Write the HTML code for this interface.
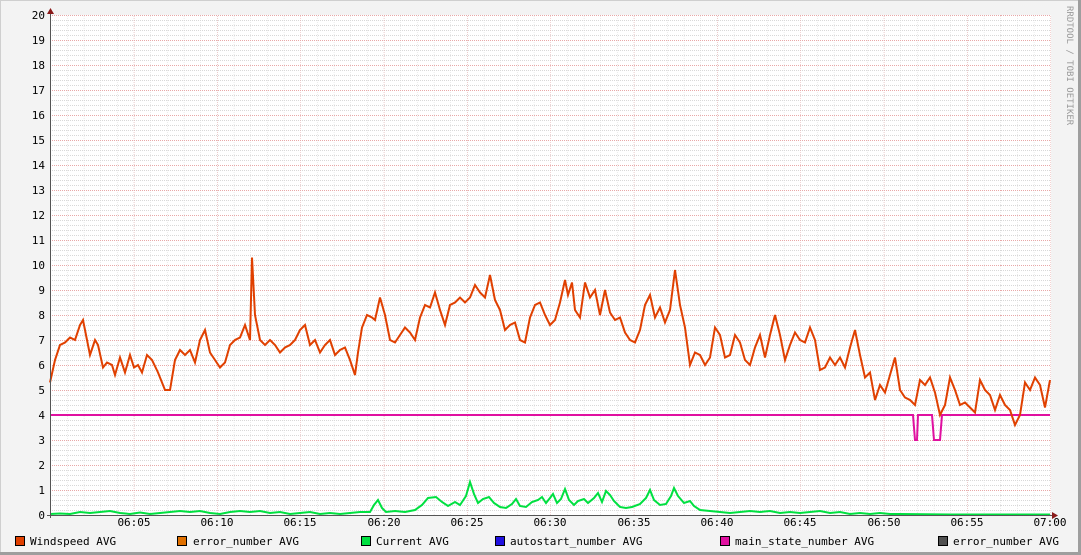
<!DOCTYPE html>
<html><head><meta charset="utf-8"><style>
html,body{margin:0;padding:0;background:#f3f3f3}
svg{display:block}
text{font-family:"DejaVu Sans Mono","Liberation Mono",monospace;font-size:11px;fill:#000}
</style></head><body>
<svg width="1081" height="555" xmlns="http://www.w3.org/2000/svg">
<rect x="0" y="0" width="1081" height="555" fill="#f3f3f3"/>
<line x1="0.5" y1="0" x2="0.5" y2="555" stroke="#cfcfcf"/>
<line x1="0" y1="0.5" x2="1081" y2="0.5" stroke="#cfcfcf"/>
<line x1="1079.5" y1="0" x2="1079.5" y2="555" stroke="#9e9e9e" stroke-width="3"/>
<line x1="0" y1="553.5" x2="1081" y2="553.5" stroke="#9e9e9e" stroke-width="3"/>
<rect x="50" y="15" width="1001" height="500" fill="#fff"/>
<defs>
<pattern id="mh" x="0" y="15" width="1001" height="5" patternUnits="userSpaceOnUse"><line x1="0" y1="0.5" x2="1001" y2="0.5" stroke="#d8d8d8" stroke-dasharray="1,1"/></pattern>
<pattern id="mv" x="50.5" y="0" width="16.667" height="500" patternUnits="userSpaceOnUse"><line x1="0" y1="0" x2="0" y2="500" stroke="#d8d8d8" stroke-dasharray="1,1"/></pattern>
<pattern id="Mh" x="0" y="15" width="1001" height="25" patternUnits="userSpaceOnUse"><line x1="0" y1="0.5" x2="1001" y2="0.5" stroke="#e8a8a8" stroke-dasharray="1,1"/></pattern>
<pattern id="Mv" x="50.5" y="0" width="83.333" height="500" patternUnits="userSpaceOnUse"><line x1="0" y1="0" x2="0" y2="500" stroke="#e8a8a8" stroke-dasharray="1,1"/></pattern>
</defs>
<rect x="50" y="15" width="1001" height="500" fill="url(#mh)"/>
<rect x="50" y="15" width="1001" height="500" fill="url(#mv)"/>
<rect x="50" y="15" width="1001" height="500" fill="url(#Mh)"/>
<rect x="50" y="15" width="1001" height="500" fill="url(#Mv)"/>
<g text-anchor="end">
<text x="45" y="19">20</text><text x="45" y="44">19</text><text x="45" y="69">18</text><text x="45" y="94">17</text><text x="45" y="119">16</text><text x="45" y="144">15</text><text x="45" y="169">14</text><text x="45" y="194">13</text><text x="45" y="219">12</text><text x="45" y="244">11</text><text x="45" y="269">10</text><text x="45" y="294">9</text><text x="45" y="319">8</text><text x="45" y="344">7</text><text x="45" y="369">6</text><text x="45" y="394">5</text><text x="45" y="419">4</text><text x="45" y="444">3</text><text x="45" y="469">2</text><text x="45" y="494">1</text><text x="45" y="519">0</text>
</g>
<g text-anchor="middle">
<text x="134" y="526">06:05</text><text x="217" y="526">06:10</text><text x="300" y="526">06:15</text><text x="384" y="526">06:20</text><text x="467" y="526">06:25</text><text x="550" y="526">06:30</text><text x="634" y="526">06:35</text><text x="717" y="526">06:40</text><text x="800" y="526">06:45</text><text x="884" y="526">06:50</text><text x="967" y="526">06:55</text><text x="1050" y="526">07:00</text>
</g>
<g fill="none" stroke-width="2" stroke-linejoin="miter">
<polyline stroke="#00e040" points="50,514 60,513.5 70,514 80,512 90,513 100,512 110,511 120,513 130,514 140,512.5 150,514 160,513 170,512 180,511 190,512 200,511 210,513 220,514 230,512 240,511 250,512 260,511 270,513 280,512 290,514 300,513 310,512 320,514 330,513 340,514 350,513 360,512 370,512 374,505 378,500 382,508 386,512 395,511 405,512 415,510 422,505 428,498 436,497 442,502 448,506 455,502 460,505 466,496 470,482 474,494 478,503 483,499 489,497 494,503 500,507 506,508 512,504 516,499 520,506 526,507 532,502 538,500 542,497 546,503 550,498 553,494 557,503 561,499 565,489 569,500 574,505 578,501 584,499 588,503 594,498 598,493 602,502 606,491 610,495 614,501 620,507 626,508 632,507 640,504 646,498 650,490 654,500 660,505 666,504 671,496 674,488 678,496 684,503 690,501 694,506 700,510 710,511 720,512 730,513 740,512 750,511 760,512 770,511 780,513 790,512 800,513 810,512 820,511 830,513 840,512 850,514 860,513 870,514 880,513 890,514 900,514 950,514.5 1050,514.5"/>
<polyline stroke="#e010a0" points="50,415 913,415 915,440 917,440 918,415 932,415 934,440 940,440 942,415 1050,415"/>
<g transform="translate(0,515) scale(1,-25)">
<polyline stroke="#e04000" vector-effect="non-scaling-stroke" points="50,5.3 55,6.2 60,6.8 65,6.9 70,7.1 75,7.0 80,7.6 83,7.8 87,7.0 90,6.4 95,7.0 98,6.8 103,5.9 107,6.1 112,6.0 115,5.6 120,6.3 125,5.7 130,6.4 134,5.9 138,6.0 142,5.7 147,6.4 152,6.2 158,5.7 165,5.0 170,5.0 175,6.2 180,6.6 185,6.4 190,6.6 195,6.1 200,7.0 205,7.4 210,6.5 215,6.2 220,5.9 225,6.1 230,6.8 235,7.0 240,7.1 245,7.6 250,7.0 252,10.3 255,8.0 260,7.0 265,6.8 270,7.0 275,6.8 280,6.5 285,6.7 290,6.8 295,7.0 300,7.4 305,7.6 310,6.8 315,7.0 320,6.5 325,6.8 330,7.0 335,6.4 340,6.6 345,6.7 350,6.2 355,5.6 358,6.5 362,7.5 367,8.0 372,7.9 375,7.8 380,8.7 385,8.0 390,7.0 395,6.9 400,7.2 405,7.5 410,7.3 415,7.0 420,7.9 425,8.4 430,8.3 435,8.9 440,8.2 445,7.6 450,8.4 455,8.5 460,8.7 465,8.5 470,8.7 475,9.2 480,8.9 485,8.7 490,9.6 495,8.6 500,8.2 505,7.4 510,7.6 515,7.7 520,7.0 525,6.9 530,7.9 535,8.4 540,8.5 545,8.0 550,7.6 555,7.8 560,8.5 565,9.4 568,8.8 572,9.3 575,8.2 580,7.9 585,9.3 590,8.7 595,9.0 600,8.0 605,9.0 610,8.1 615,7.8 620,7.9 625,7.3 630,7.0 635,6.9 640,7.4 645,8.4 650,8.8 655,7.9 660,8.3 665,7.7 670,8.2 675,9.8 680,8.4 685,7.5 690,6.0 695,6.5 700,6.4 705,6.0 710,6.3 715,7.5 720,7.2 725,6.3 730,6.4 735,7.2 740,6.9 745,6.2 750,6.0 755,6.7 760,7.2 765,6.3 770,7.2 775,8.0 780,7.2 785,6.2 790,6.8 795,7.3 800,7.0 805,6.9 810,7.5 815,7.0 820,5.8 825,5.9 830,6.3 835,6.0 840,6.3 845,5.9 850,6.7 855,7.4 860,6.4 865,5.5 870,5.7 875,4.6 880,5.2 885,4.9 890,5.6 895,6.3 900,5.0 905,4.7 910,4.6 915,4.4 920,5.4 925,5.2 930,5.5 935,4.9 940,4.0 945,4.4 950,5.5 955,5.0 960,4.4 965,4.5 970,4.3 975,4.1 980,5.4 985,5.0 990,4.8 995,4.2 1000,4.8 1005,4.4 1010,4.2 1015,3.6 1020,4.0 1025,5.3 1030,5.0 1035,5.5 1040,5.2 1045,4.3 1050,5.4"/>
</g>
</g>
<line x1="50.5" y1="10" x2="50.5" y2="518" stroke="#555"/>
<line x1="47" y1="515.5" x2="1055" y2="515.5" stroke="#555"/>
<polygon points="47,14 54,14 50.5,8" fill="#8b1a1a"/>
<polygon points="1052,512 1052,519 1058,515.5" fill="#8b1a1a"/>
<g transform="translate(1067,6) rotate(90)"><text x="0" y="0" style="font-size:9px;fill:#999">RRDTOOL / TOBI OETIKER</text></g>
<g stroke="#000" stroke-width="1">
<rect x="15.5" y="536.5" width="9" height="9" fill="#e04000"/>
<rect x="177.5" y="536.5" width="9" height="9" fill="#e07000"/>
<rect x="361.5" y="536.5" width="9" height="9" fill="#00e040"/>
<rect x="495.5" y="536.5" width="9" height="9" fill="#2010e0"/>
<rect x="720.5" y="536.5" width="9" height="9" fill="#e010a0"/>
<rect x="938.5" y="536.5" width="9" height="9" fill="#505050"/>
</g>
<text x="30" y="545">Windspeed AVG</text>
<text x="193" y="545">error_number AVG</text>
<text x="376" y="545">Current AVG</text>
<text x="510" y="545">autostart_number AVG</text>
<text x="735" y="545">main_state_number AVG</text>
<text x="953" y="545">error_number AVG</text>
</svg>
</body></html>
